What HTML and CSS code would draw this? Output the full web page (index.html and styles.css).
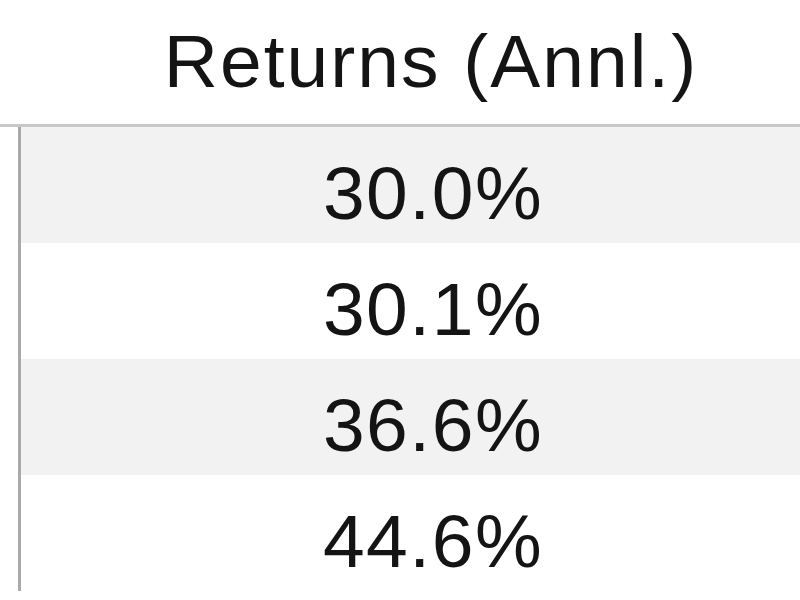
FILE: index.html
```html
<!DOCTYPE html>
<html>
<head>
<meta charset="utf-8">
<link rel="stylesheet" href="styles.css">
</head>
<body>
<div class="table">
  <div class="head-row">
    <div class="head-cell">Returns (Annl.)</div>
  </div>
  <div class="body">
    <div class="row alt">30.0%</div>
    <div class="row">30.1%</div>
    <div class="row alt">36.6%</div>
    <div class="row">44.6%</div>
  </div>
</div>
</body>
</html>
```
FILE: styles.css
```css
html, body {
  margin: 0;
  padding: 0;
  background: #ffffff;
  overflow: hidden;
  width: 800px;
  height: 600px;
}
.table {
  width: 800px;
  font-family: "Liberation Sans", Arial, sans-serif;
  color: #141414;
}
.head-row {
  border-bottom: 3px solid #c8c8c8;
  box-sizing: border-box;
  height: 127px;
  display: flex;
}
.head-cell {
  flex: 1;
  text-align: center;
  font-size: 75px;
  letter-spacing: 2px;
  line-height: 1;
  padding-top: 24px;
  padding-left: 62px;
}
.body {
  margin-left: 18px;
  border-left: 3px solid #a9a9a9;
}
.row {
  height: 116px;
  display: flex;
  align-items: center;
  justify-content: center;
  font-size: 75px;
  letter-spacing: 1.5px;
  padding-left: 45px;
  padding-top: 15px;
  box-sizing: border-box;
}
.alt {
  background: #f2f2f2;
}
```
